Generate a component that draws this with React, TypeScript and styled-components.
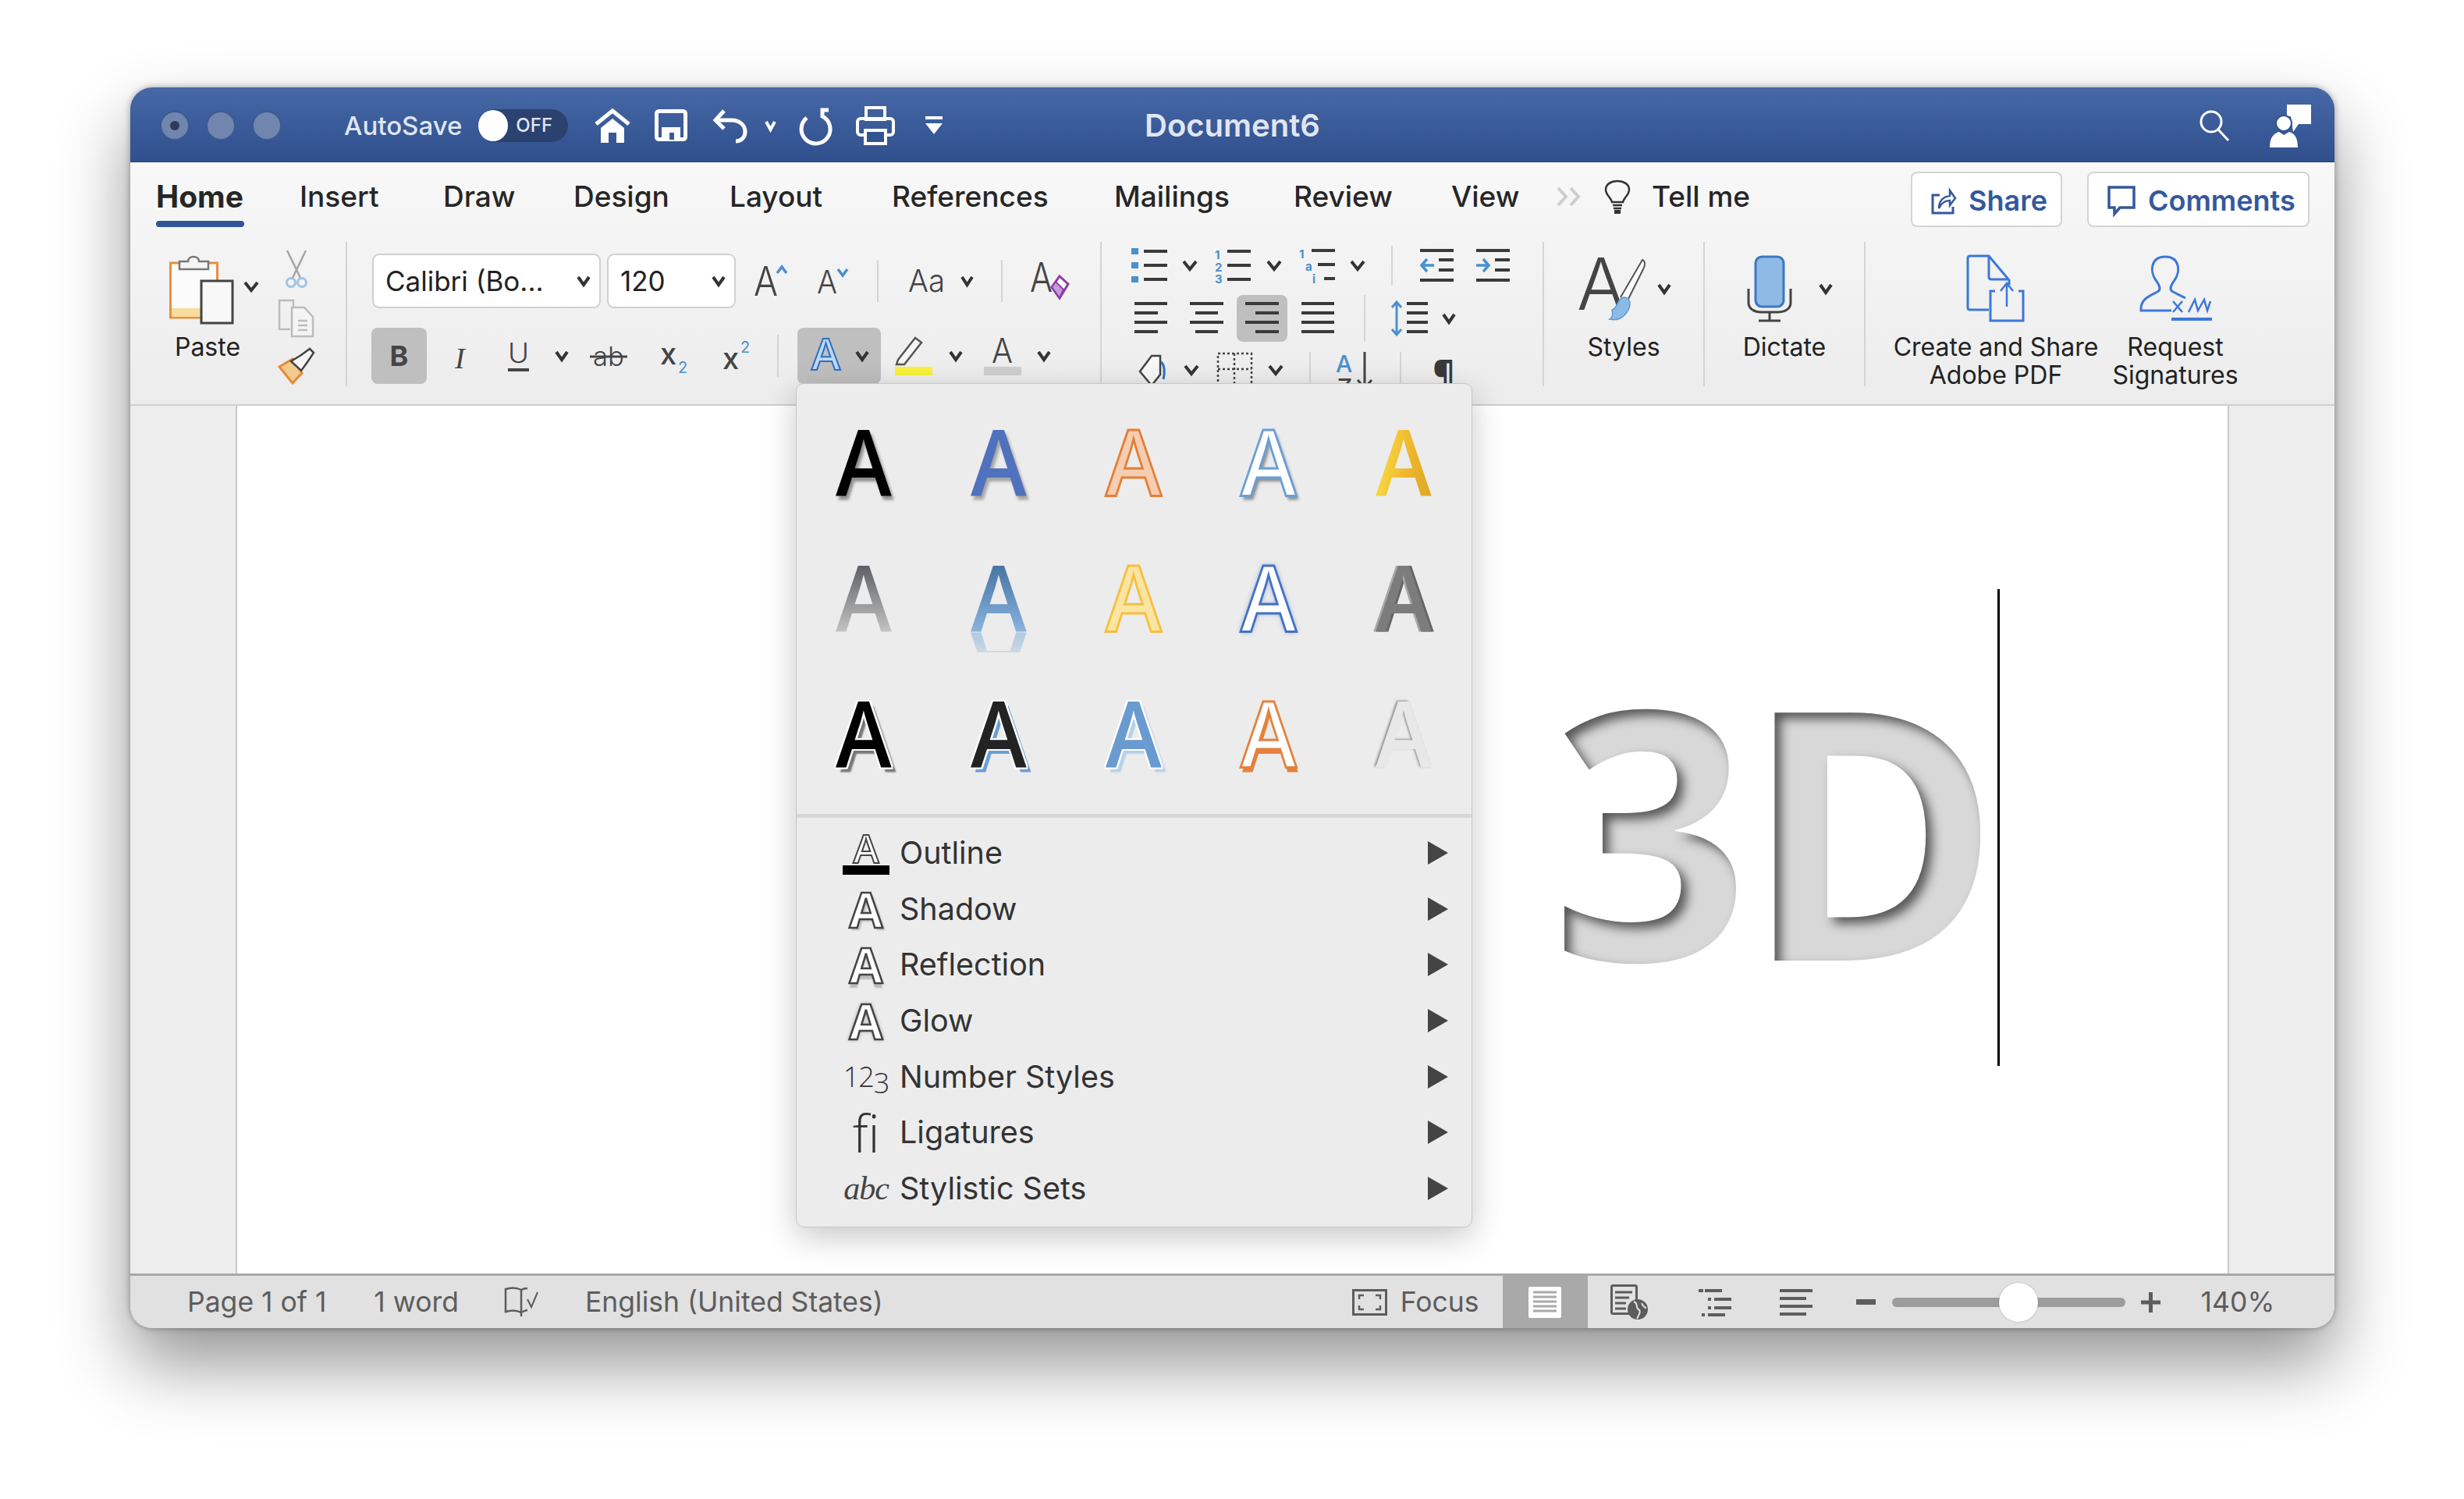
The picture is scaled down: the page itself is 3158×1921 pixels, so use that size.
import React from "react";
import styled, { createGlobalStyle } from "styled-components";

const BLUE = "#4a90d0";
const INK = "#444";
const UI = '"Inter", "Liberation Sans", sans-serif';
const WORDART = '"Open Sans", "Liberation Sans", sans-serif';

const Global = createGlobalStyle`
  html, body { margin: 0; padding: 0; background: #fff; }
  body { font-family: ${UI}; }
`;

const Stage = styled.div`
  width: 3158px;
  height: 1921px;
  padding: 112px 166px 0 167px;
  box-sizing: border-box;
  background: #fff;
`;
const Win = styled.div`
  position: relative;
  width: 2825px;
  height: 1590px;
  display: flex;
  flex-direction: column;
  border-radius: 28px;
  box-shadow: 0 46px 90px rgba(0, 0, 0, 0.42), 0 0 8px rgba(0, 0, 0, 0.35);
  background: #ededed;
`;

/* title bar */
const TitleBar = styled.div`
  height: 96px;
  flex: none;
  padding-top: 2px;
  display: grid;
  grid-template-columns: 1fr auto 1fr;
  align-items: center;
  background: linear-gradient(#4768a6, #2f4f8d);
  border-radius: 28px 28px 0 0;
  border-bottom: 1px solid #2a4478;
  box-sizing: border-box;
`;
const TitleLeft = styled.div`
  display: flex;
  align-items: center;
  padding-left: 38px;
`;
const TitleRight = styled.div`
  display: flex;
  align-items: center;
  justify-content: flex-end;
  padding-right: 30px;
`;
const Light = styled.div<{ $dot?: boolean }>`
  width: 38px;
  height: 38px;
  margin-right: 21px;
  border-radius: 50%;
  background: #7186ae;
  border: 2px solid #3d5a92;
  box-sizing: border-box;
  display: flex;
  align-items: center;
  justify-content: center;
  &::after {
    content: "";
    width: 12px;
    height: 12px;
    border-radius: 50%;
    background: ${(p) => (p.$dot ? "#2f3b55" : "transparent")};
  }
`;
const AutoSave = styled.span`
  margin-left: 59px;
  font-size: 33px;
  font-weight: 500;
  color: #dfe6f3;
`;
const Toggle = styled.div`
  margin-left: 21px;
  width: 115px;
  height: 42px;
  border-radius: 21px;
  background: #2b4270;
  display: flex;
  align-items: center;
  box-sizing: border-box;
`;
const Knob = styled.div`
  width: 38px;
  height: 40px;
  border-radius: 50%;
  background: #fff;
`;
const ToggleText = styled.span`
  margin-left: 10px;
  font-size: 24px;
  font-weight: 500;
  color: #dfe6f3;
`;
const DocTitle = styled.div`
  font-size: 40px;
  font-weight: 600;
  color: #e0e6f2;
`;

/* tabs */
const Ribbon = styled.div`
  height: 312px;
  flex: none;
  background: linear-gradient(#f8f8f8, #ececec);
  border-bottom: 2px solid #cfcfcf;
  box-sizing: border-box;
`;
const TabRow = styled.div`
  height: 102px;
  box-sizing: border-box;
  padding: 12px 32px 0 33px;
  display: flex;
  align-items: flex-start;
`;
const Tab = styled.div<{ $w: number; $active?: boolean }>`
  width: ${(p) => p.$w}px;
  flex: none;
  height: 71px;
  display: flex;
  flex-direction: column;
  font-size: ${(p) => (p.$active ? 39 : 37)}px;
  font-weight: ${(p) => (p.$active ? 700 : 500)};
  color: #262626;
  line-height: 63px;
`;
const TabLine = styled.div`
  width: 113px;
  height: 8px;
  border-radius: 4px;
  background: #2f5597;
`;
const TellMe = styled.span`
  margin-left: 26px;
  font-size: 37px;
  font-weight: 500;
  color: #262626;
  line-height: 63px;
`;
const TellIcons = styled.div`
  display: flex;
  align-items: center;
  height: 63px;
`;
const ShareBox = styled.div`
  margin-left: auto;
  display: flex;
  gap: 32px;
`;
const ShareButton = styled.div<{ $w: number }>`
  width: ${(p) => p.$w}px;
  height: 71px;
  box-sizing: border-box;
  padding: 2px 0 0 24px;
  background: #fff;
  border: 2px solid #d4d4d4;
  border-radius: 8px;
  display: flex;
  align-items: center;
  gap: 16px;
  font-size: 36px;
  font-weight: 600;
  color: #35589c;
`;

/* ribbon groups */
const Groups = styled.div`
  display: flex;
  height: 185px;
`;
const Group = styled.div<{ $w: number; $pl: number; $last?: boolean }>`
  width: ${(p) => p.$w}px;
  flex: none;
  box-sizing: border-box;
  padding-left: ${(p) => p.$pl}px;
  border-right: ${(p) => (p.$last ? "none" : "2px solid #d4d4d4")};
`;
const ClipGroup = styled(Group)`
  display: flex;
`;
const RowGroup = styled(Group)`
  display: flex;
  flex-direction: column;
`;
const BigGroup = styled(Group)`
  display: flex;
  gap: 20px;
`;
const BigTool = styled.div<{ $w?: number }>`
  width: ${(p) => (p.$w ? `${p.$w}px` : "100%")};
  flex: none;
  display: flex;
  flex-direction: column;
  align-items: center;
  padding-top: 15px;
  box-sizing: border-box;
`;
const BigIcon = styled.div`
  height: 90px;
  flex: none;
  display: flex;
  align-items: center;
  justify-content: center;
`;
const BigLabel = styled.div<{ $nudge?: number }>`
  margin-top: 12px;
  margin-left: ${(p) => p.$nudge ?? 0}px;
  font-size: 32px;
  line-height: 36px;
  color: #222;
  text-align: center;
  white-space: nowrap;
`;
const PasteChevron = styled.div`
  margin-left: 13px;
  padding-top: 50px;
`;
const SmallColumn = styled.div`
  margin-left: 24px;
  padding-top: 10px;
  display: flex;
  flex-direction: column;
  align-items: center;
  gap: 14px;
  width: 47px;
`;
const ToolRow = styled.div<{ $h: number; $mt: number }>`
  height: ${(p) => p.$h}px;
  margin-top: ${(p) => p.$mt}px;
  display: flex;
  align-items: center;
`;
const Combo = styled.div<{ $w: number; $ml?: number }>`
  width: ${(p) => p.$w}px;
  height: 70px;
  flex: none;
  margin-left: ${(p) => p.$ml ?? 0}px;
  box-sizing: border-box;
  background: #fff;
  border: 2px solid #d0d0d0;
  border-radius: 9px;
  display: flex;
  align-items: center;
  justify-content: space-between;
  padding: 0 11px 0 15px;
  font-size: 35px;
  color: #222;
`;
const Pressed = styled.div<{ $w: number; $h: number; $ml?: number }>`
  width: ${(p) => p.$w}px;
  height: ${(p) => p.$h}px;
  flex: none;
  margin-left: ${(p) => p.$ml ?? 0}px;
  background: #bfbfbf;
  border-radius: 8px;
  display: flex;
  align-items: center;
  justify-content: center;
  gap: 14px;
  font-size: 36px;
  font-weight: 700;
  color: #444;
`;
const MiniSep = styled.div<{ $ml: number; $h: number }>`
  width: 2px;
  height: ${(p) => p.$h}px;
  flex: none;
  margin-left: ${(p) => p.$ml}px;
  background: #d4d4d4;
`;
const Svg = styled.svg<{ $ml?: number }>`
  display: block;
  flex: none;
  overflow: visible;
  margin-left: ${(p) => p.$ml ?? 0}px;
`;

function Ic({ w, h, ml, children }: { w: number; h: number; ml?: number; children: React.ReactNode }) {
  return (
    <Svg $ml={ml} width={w} height={h} viewBox={`0 0 ${w} ${h}`} fill="none">
      {children}
    </Svg>
  );
}
function Chev({ ml, w = 18, color = "#333" }: { ml?: number; w?: number; color?: string }) {
  return (
    <Ic w={w} h={14} ml={ml}>
      <path d={`M2 2 L${w / 2} 12 L${w - 2} 2`} stroke={color} strokeWidth={4} />
    </Ic>
  );
}
const svgText = { fontFamily: UI, fill: INK };

function ThinA({ x, y, size, len }: { x: number; y: number; size: number; len: number }) {
  return (
    <text x={x} y={y} fontSize={size} fontWeight={300} textLength={len} lengthAdjust="spacingAndGlyphs" style={svgText}>
      A
    </text>
  );
}

function HLines({ rows, color = "#3a3a3a", sw = 4 }: { rows: [number, number, number][]; color?: string; sw?: number }) {
  return (
    <>
      {rows.map(([x1, x2, y], i) => (
        <line key={i} x1={x1} x2={x2} y1={y} y2={y} stroke={color} strokeWidth={sw} />
      ))}
    </>
  );
}

/* canvas */
const Canvas = styled.div`
  flex: 1;
  min-height: 0;
  padding: 0 135px;
  background: #ededed;
`;
const Paper = styled.div`
  height: 100%;
  box-sizing: border-box;
  padding: 0 292px 32px 0;
  background: #fff;
  border-left: 2px solid #c9c9c9;
  border-right: 2px solid #c9c9c9;
  display: flex;
  justify-content: flex-end;
  align-items: center;
`;
const HiddenDefs = styled.svg`
  position: absolute;
  width: 0;
  height: 0;
`;
const Embossed = styled.div`
  font-family: ${WORDART};
  font-size: 445px;
  font-weight: 700;
  line-height: 1;
  letter-spacing: -8px;
  margin: -4px 4px 0 0;
  color: #d8d8d8;
  filter: url(#emboss);
`;
const Caret = styled.div`
  width: 3px;
  height: 611px;
  flex: none;
  background: #000;
`;

/* status bar */
const StatusBar = styled.div`
  height: 70px;
  flex: none;
  box-sizing: border-box;
  border-top: 3px solid #a8a8a8;
  border-radius: 0 0 28px 28px;
  background: #e1e1e1;
  display: flex;
  align-items: center;
  font-size: 35.5px;
  color: #5d5d5d;
`;
const StatusText = styled.span<{ $ml: number }>`
  margin-left: ${(p) => p.$ml}px;
  white-space: nowrap;
`;
const ActiveView = styled.div`
  margin-left: 30px;
  width: 109px;
  height: 100%;
  flex: none;
  background: #a9a9a9;
  display: flex;
  align-items: center;
  justify-content: center;
`;
const Track = styled.div`
  position: relative;
  margin-left: 21px;
  width: 299px;
  height: 12px;
  border-radius: 6px;
  background: #9c9c9c;
`;
const Thumb = styled.div<{ $left: number }>`
  position: absolute;
  left: ${(p) => p.$left}px;
  top: -19px;
  width: 50px;
  height: 50px;
  border-radius: 50%;
  background: #fff;
  box-shadow: 0 0 2px rgba(0, 0, 0, 0.3);
`;

/* text effects menu */
const Menu = styled.div`
  position: absolute;
  left: 853px;
  top: 379px;
  width: 867px;
  height: 1082px;
  box-sizing: border-box;
  background: #ececec;
  border: 1px solid #c6c6c6;
  border-radius: 10px;
  box-shadow: 0 12px 40px rgba(0, 0, 0, 0.22);
  z-index: 5;
`;
const Gallery = styled.div`
  display: grid;
  grid-template-columns: repeat(5, 1fr);
  grid-auto-rows: 174px;
  padding: 11px 0 18px;
`;
const Cell = styled.div`
  display: flex;
  align-items: center;
  justify-content: center;
`;
const ring = (c: string, n: number) =>
  `${n}px 0 0 ${c}, -${n}px 0 0 ${c}, 0 ${n}px 0 ${c}, 0 -${n}px 0 ${c}, ${n}px ${n}px 0 ${c}, -${n}px ${n}px 0 ${c}, ${n}px -${n}px 0 ${c}, -${n}px -${n}px 0 ${c}`;
const Art = styled.span<{ $fill: string; $stroke?: string; $shadow?: string; $paint?: string; $reflect?: boolean }>`
  font-family: ${WORDART};
  font-size: 118px;
  font-weight: 600;
  line-height: 0.776;
  display: block;
  transform: scaleX(0.92);
  color: ${(p) => (p.$paint ? "transparent" : p.$fill)};
  ${(p) => (p.$stroke ? `-webkit-text-stroke: 3px ${p.$stroke};` : "")}
  ${(p) => (p.$shadow ? `text-shadow: ${p.$shadow};` : "")}
  ${(p) => (p.$paint ? `background: ${p.$paint}; -webkit-background-clip: text; background-clip: text;` : "")}
  ${(p) =>
    p.$reflect
      ? "-webkit-box-reflect: below 0 linear-gradient(transparent 72%, rgba(255,255,255,0.25) 72%, rgba(255,255,255,0.6));"
      : ""}
`;
const Divider = styled.div`
  height: 5px;
  background: #d8d8d8;
`;
const MenuList = styled.div`
  padding-top: 9px;
`;
const MenuRow = styled.div`
  height: 71.7px;
  display: flex;
  align-items: center;
  padding: 0 30px 0 59px;
  font-size: 39.5px;
  color: #333;
`;
const MenuIcon = styled.div`
  width: 60px;
  height: 60px;
  margin-right: 13px;
  flex: none;
  display: flex;
  flex-direction: column;
  align-items: center;
  justify-content: center;
  color: #333;
`;
const RowArrow = styled.div`
  margin-left: auto;
  width: 0;
  height: 0;
  border-left: 26px solid #444;
  border-top: 15px solid transparent;
  border-bottom: 15px solid transparent;
`;
const HollowA = styled.span<{ $halo?: string; $small?: boolean }>`
  font-family: ${WORDART};
  font-size: ${(p) => (p.$small ? 50 : 62)}px;
  line-height: ${(p) => (p.$small ? 44 : 60)}px;
  font-weight: ${(p) => (p.$small ? 600 : 700)};
  color: #fff;
  -webkit-text-stroke: ${(p) => (p.$small ? 2 : 2.5)}px #444;
  ${(p) => (p.$halo ? `text-shadow: ${p.$halo};` : "")}
`;
const Swatch = styled.div`
  width: 60px;
  height: 12px;
  background: #000;
`;
const Numerals = styled.span`
  font-family: ${WORDART};
  font-size: 36px;
  font-weight: 300;
  white-space: nowrap;
  letter-spacing: -1px;
`;
const OldStyle = styled.span`
  position: relative;
  top: 8px;
`;
const Ligature = styled.span`
  font-family: ${WORDART};
  font-size: 66px;
  font-weight: 300;
  line-height: 60px;
`;
const ItalicAbc = styled.span`
  font-family: "Liberation Serif", serif;
  font-size: 42px;
  font-style: italic;
  letter-spacing: -1px;
  color: #444;
`;

const ART_STYLES: React.ComponentProps<typeof Art>[] = [
  { $fill: "#000", $shadow: "3px 5px 4px rgba(0,0,0,0.4)" },
  { $fill: "#4f71be", $shadow: "3px 5px 4px rgba(0,0,0,0.3)" },
  { $fill: "#f5cdb1", $stroke: "#e67e35" },
  { $fill: "#fff", $stroke: "#6a9fd6", $shadow: "3px 5px 4px rgba(0,0,0,0.4)" },
  { $fill: "#eebb2e", $paint: "linear-gradient(100deg, #f8d440 20%, #ecb52a 60%, #dfa626)" },
  { $fill: "#888", $paint: "linear-gradient(#55575b, #c4c4c4)" },
  { $fill: "#6a9bd0", $paint: "linear-gradient(#416f9f, #8ab3de)", $reflect: true },
  { $fill: "#fbe5a2", $stroke: "#f7bf3d" },
  { $fill: "#fff", $stroke: "#4472c4", $shadow: "0 0 7px rgba(68,114,196,0.75)" },
  { $fill: "#7c7c7c", $shadow: "-3px 0 0 #a8a8a8, 3px 0 0 #666" },
  { $fill: "#000", $shadow: `${ring("#fff", 2)}, 6px 6px 2px #777` },
  { $fill: "#232323", $shadow: `${ring("#fff", 2)}, 6px 6px 0 #6a9fd6` },
  { $fill: "#6a9bd0", $shadow: `${ring("#fff", 2)}, 6px 6px 2px #b5cfeb` },
  { $fill: "#fff", $stroke: "#e5813d", $shadow: "2px 6px 0 #e5813d" },
  { $fill: "#e8e8e8", $shadow: "-2px -1px 3px #8a8a8a" },
];

const MENU_ROWS: [React.ReactNode, string][] = [
  [
    <>
      <HollowA $small>A</HollowA>
      <Swatch />
    </>,
    "Outline",
  ],
  [<HollowA $halo="3px 3px 2px #bbb">A</HollowA>, "Shadow"],
  [<HollowA $halo="0 6px 2px #bbb">A</HollowA>, "Reflection"],
  [<HollowA $halo="0 0 5px #aaa, 0 0 5px #aaa">A</HollowA>, "Glow"],
  [
    <Numerals>
      12<OldStyle>3</OldStyle>
    </Numerals>,
    "Number Styles",
  ],
  [<Ligature>ﬁ</Ligature>, "Ligatures"],
  [<ItalicAbc>abc</ItalicAbc>, "Stylistic Sets"],
];

const TABS: [string, number][] = [
  ["Home", 184],
  ["Insert", 184],
  ["Draw", 167],
  ["Design", 200],
  ["Layout", 208],
  ["References", 285],
  ["Mailings", 230],
  ["Review", 202],
  ["View", 134],
];

export default function App() {
  return (
    <Stage>
      <Global />
      <HiddenDefs>
        <filter id="emboss" x="-5%" y="-5%" width="110%" height="110%" colorInterpolationFilters="sRGB">
          <feOffset in="SourceAlpha" dx="8" dy="8" />
          <feGaussianBlur stdDeviation="7" result="b" />
          <feComposite in="SourceAlpha" in2="b" operator="out" result="inner" />
          <feFlood floodColor="#565656" />
          <feComposite in2="inner" operator="in" result="shade" />
          <feMerge>
            <feMergeNode in="SourceGraphic" />
            <feMergeNode in="shade" />
          </feMerge>
        </filter>
      </HiddenDefs>
      <Win>
        <TitleBar>
          <TitleLeft>
            <Light $dot />
            <Light />
            <Light />
            <AutoSave>AutoSave</AutoSave>
            <Toggle>
              <Knob />
              <ToggleText>OFF</ToggleText>
            </Toggle>
            <Ic w={48} h={44} ml={33}>
              <path d="M3 20 L24 3 L45 20" stroke="#fff" strokeWidth={5} />
              <path d="M9 25 L24 13 L39 25 V44 H29 V31 H19 V44 H9Z" fill="#fff" />
            </Ic>
            <Ic w={42} h={41} ml={30}>
              <rect x={2.5} y={2.5} width={37} height={36} rx={3} stroke="#fff" strokeWidth={5} />
              <rect x={9} y={23} width={24} height={16} fill="#fff" />
              <rect x={19} y={30} width={6} height={9} fill="#3a5a96" />
            </Ic>
            <Ic w={45} h={44} ml={32}>
              <path d="M15 3 L4 15 L15 26 M5 15 H24 C36 15 42 22 42 30 C42 37 37 42 30 42" stroke="#fff" strokeWidth={5} />
            </Ic>
            <Chev ml={22} w={15} color="#fff" />
            <Ic w={43} h={46} ml={28}>
              <path d="M11 13 A18.5 18.5 0 1 0 31 11 V3 H39" stroke="#fff" strokeWidth={5} />
            </Ic>
            <Ic w={50} h={50} ml={31}>
              <rect x={13} y={2} width={24} height={15} stroke="#fff" strokeWidth={4} />
              <rect x={2} y={16} width={46} height={21} rx={4} stroke="#fff" strokeWidth={4} />
              <rect x={12} y={31} width={26} height={17} fill="#34548f" stroke="#fff" strokeWidth={4} />
            </Ic>
            <Ic w={22} h={23} ml={39}>
              <rect width={22} height={4} fill="#fff" />
              <path d="M0 9 H22 L11 23Z" fill="#fff" />
            </Ic>
          </TitleLeft>
          <DocTitle>Document6</DocTitle>
          <TitleRight>
            <Ic w={40} h={42}>
              <circle cx={16} cy={16} r={13} stroke="#fff" strokeWidth={3} />
              <path d="M25 26 L38 40" stroke="#fff" strokeWidth={3} />
            </Ic>
            <Ic w={53} h={56} ml={51}>
              <path d="M22 1 H53 V26 H37 L30 36 L27 16 H22Z" fill="#fff" />
              <circle cx={18} cy={25} r={10} fill="#fff" stroke="#34548f" strokeWidth={2} />
              <path d="M0 56 C0 42 6 38 12 36 L18 40 L25 36 C31 38 36 42 36 56Z" fill="#fff" />
            </Ic>
          </TitleRight>
        </TitleBar>

        <Ribbon>
          <TabRow>
            {TABS.map(([label, w], i) => (
              <Tab key={label} $w={w} $active={i === 0}>
                {label}
                {i === 0 && <TabLine />}
              </Tab>
            ))}
            <TellIcons>
              <Ic w={36} h={28}>
                <path d="M3 3 L13 14 L3 25 M19 3 L29 14 L19 25" stroke="#cdcdcd" strokeWidth={4} />
              </Ic>
              <Ic w={36} h={44} ml={25}>
                <path d="M11 29 C9 22 3 20 3 13 C3 6 10 2 18 2 C26 2 33 6 33 13 C33 20 27 22 25 29Z" stroke="#333" strokeWidth={2.5} />
                <path d="M12 33 H24 M13 37 H23" stroke="#333" strokeWidth={2.5} />
                <rect x={14} y={39} width={8} height={5} fill="#333" />
              </Ic>
              <TellMe>Tell me</TellMe>
            </TellIcons>
            <ShareBox>
              <ShareButton $w={194}>
                <Ic w={32} h={36}>
                  <path d="M11 11 H2 V34 H28 V26" stroke="#35589c" strokeWidth={3} />
                  <path d="M10 28 C10 18 16 13 24 12 V5 L31 15 L24 24 V18 C18 18 13 21 10 28Z" stroke="#35589c" strokeWidth={2.5} />
                </Ic>
                Share
              </ShareButton>
              <ShareButton $w={285}>
                <Ic w={36} h={38}>
                  <path d="M2 2 H34 V28 H16 L9 36 V28 H2Z" stroke="#35589c" strokeWidth={3.5} />
                </Ic>
                Comments
              </ShareButton>
            </ShareBox>
          </TabRow>

          <Groups>
            <ClipGroup $w={278} $pl={50}>
              <BigTool $w={82}>
                <BigIcon>
                  <Ic w={82} h={90}>
                    <rect x={1.5} y={12} width={60} height={70} fill="#fbfbfb" stroke="#e8903e" strokeWidth={3} />
                    <rect x={3} y={70} width={40} height={11} fill="#f9dc9e" />
                    <path d="M13 20 V10 H24 C24 2 38 2 38 10 H50 V20Z" fill="#f5f5f5" stroke="#777" strokeWidth={2.5} />
                    <rect x={41} y={35} width={40} height={54} fill="#f8f8f8" stroke="#444" strokeWidth={3} />
                  </Ic>
                </BigIcon>
                <BigLabel $nudge={16}>Paste</BigLabel>
              </BigTool>
              <PasteChevron>
                <Chev w={20} />
              </PasteChevron>
              <SmallColumn>
                <Ic w={32} h={50}>
                  <path d="M4 1 L21 36 M28 1 L11 36" stroke="#a4a4a4" strokeWidth={2.5} />
                  <circle cx={9} cy={42} r={5.5} stroke="#9ec3e6" strokeWidth={3} />
                  <circle cx={23} cy={42} r={5.5} stroke="#9ec3e6" strokeWidth={3} />
                </Ic>
                <Ic w={47} h={48}>
                  <path d="M20 9 V1 H2 V38 H16" stroke="#bcbcbc" strokeWidth={2.5} />
                  <path d="M18 10 H34 L45 22 V47 H18Z" stroke="#bcbcbc" strokeWidth={2.5} fill="#f4f4f4" />
                  <path d="M26 27 H38 M26 33 H38 M26 39 H38" stroke="#bcbcbc" strokeWidth={2.5} />
                </Ic>
                <Ic w={47} h={46}>
                  <path d="M2 24 L19 14 L31 32 L19 45Z" fill="#f4c98e" stroke="#e58a33" strokeWidth={3} />
                  <path d="M17 17 L30 29 L38 18 L46 6 L41 1 L30 9Z" fill="#f6f6f6" stroke="#444" strokeWidth={2.5} />
                </Ic>
              </SmallColumn>
            </ClipGroup>

            <RowGroup $w={967} $pl={31}>
              <ToolRow $h={70} $mt={15}>
                <Combo $w={293} $ml={1}>
                  Calibri (Bo...
                  <Chev w={18} />
                </Combo>
                <Combo $w={165} $ml={8}>
                  120
                  <Chev w={18} />
                </Combo>
                <Ic w={43} h={42} ml={23}>
                  <ThinA x={0} y={40} size={52} len={31} />
                  <path d="M30 11 L36 3 L42 11" stroke={BLUE} strokeWidth={3.5} />
                </Ic>
                <Ic w={40} h={36} ml={38}>
                  <ThinA x={0} y={34} size={41} len={26} />
                  <path d="M27 3 L33 11 L39 3" stroke={BLUE} strokeWidth={3.5} />
                </Ic>
                <MiniSep $ml={37} $h={54} />
                <Ic w={48} h={32} ml={38}>
                  <text x={0} y={30} fontSize={40} fontWeight={300} textLength={47} lengthAdjust="spacingAndGlyphs" style={svgText}>
                    Aa
                  </text>
                </Ic>
                <Chev ml={19} w={17} />
                <MiniSep $ml={35} $h={54} />
                <Ic w={50} h={52} ml={35}>
                  <ThinA x={0} y={40} size={52} len={29} />
                  <path d="M28 34 L38 20 L49 30 L38 48Z" fill="#fff" stroke="#8e3aa8" strokeWidth={3} />
                  <path d="M28 34 L33 27 L43 37 L38 48Z" fill="#c79ad6" stroke="#8e3aa8" strokeWidth={2} />
                </Ic>
              </ToolRow>
              <ToolRow $h={72} $mt={25}>
                <Pressed $w={71} $h={72}>B</Pressed>
                <Ic w={22} h={40} ml={34}>
                  <text x={2} y={36} fontSize={38} fontStyle="italic" style={{ fontFamily: '"Liberation Serif", serif', fill: INK }}>I</text>
                </Ic>
                <Ic w={27} h={44} ml={48}>
                  <text x={0} y={31} fontSize={36} fontWeight={300} textLength={27} lengthAdjust="spacingAndGlyphs" style={svgText}>U</text>
                  <rect x={0} y={38} width={27} height={4} fill={INK} />
                </Ic>
                <Chev ml={33} />
                <Ic w={48} h={42} ml={27}>
                  <text x={4} y={34} fontSize={34} fontWeight={300} textLength={40} lengthAdjust="spacingAndGlyphs" style={svgText}>ab</text>
                  <line x1={0} x2={48} y1={22} y2={22} stroke={INK} strokeWidth={3} />
                </Ic>
                <Ic w={36} h={48} ml={42}>
                  <text x={0} y={35} fontSize={38} fontWeight={500} style={svgText}>x</text>
                  <text x={23} y={46} fontSize={20} style={{ fontFamily: UI, fill: BLUE }}>2</text>
                </Ic>
                <Ic w={36} h={48} ml={44}>
                  <text x={0} y={41} fontSize={38} fontWeight={500} style={svgText}>x</text>
                  <text x={23} y={20} fontSize={20} style={{ fontFamily: UI, fill: BLUE }}>2</text>
                </Ic>
                <MiniSep $ml={34} $h={54} />
                <Pressed $w={107} $h={72} $ml={24}>
                  <Ic w={44} h={48}>
                    <text x={2} y={42} fontSize={56} fontWeight={600} fill="#bcd8f3" stroke="#2f6fbf" strokeWidth={2} style={{ fontFamily: WORDART }}>A</text>
                  </Ic>
                  <Chev />
                </Pressed>
                <Ic w={48} h={50} ml={18}>
                  <path d="M4 30 L26 2 L34 8 L12 36 L2 36Z" stroke="#555" strokeWidth={2.5} fill="#f6f6f6" />
                  <rect x={0} y={39} width={48} height={11} fill="#f9f13c" />
                </Ic>
                <Chev ml={21} />
                <Ic w={48} h={50} ml={27}>
                  <ThinA x={10} y={34} size={44} len={27} />
                  <rect x={0} y={39} width={48} height={11} fill="#cfcfcf" />
                </Ic>
                <Chev ml={20} />
              </ToolRow>
            </RowGroup>

            <RowGroup $w={567} $pl={38}>
              <ToolRow $h={44} $mt={8}>
                <Ic w={46} h={44}>
                  {[0, 18, 36].map((y) => (
                    <rect key={y} x={0} y={y} width={9} height={8} fill={BLUE} />
                  ))}
                  <HLines rows={[[16, 46, 4], [16, 46, 22], [16, 46, 40]]} />
                </Ic>
                <Chev ml={19} w={20} />
                <Ic w={46} h={44} ml={22}>
                  <text x={0} y={14} fontSize={15} fontWeight={700} fill={BLUE} style={{ fontFamily: UI }}>1</text>
                  <text x={0} y={30} fontSize={15} fontWeight={700} fill={BLUE} style={{ fontFamily: UI }}>2</text>
                  <text x={0} y={45} fontSize={15} fontWeight={700} fill={BLUE} style={{ fontFamily: UI }}>3</text>
                  <HLines rows={[[16, 46, 4], [16, 46, 22], [16, 46, 40]]} />
                </Ic>
                <Chev ml={20} w={20} />
                <Ic w={46} h={46} ml={22}>
                  <text x={0} y={14} fontSize={15} fontWeight={700} fill={BLUE} style={{ fontFamily: UI }}>1</text>
                  <text x={8} y={30} fontSize={15} fontWeight={700} fill={BLUE} style={{ fontFamily: UI }}>a</text>
                  <text x={17} y={46} fontSize={15} fontWeight={700} fill={BLUE} style={{ fontFamily: UI }}>i</text>
                  <HLines rows={[[16, 46, 4], [24, 46, 22], [32, 46, 40]]} />
                </Ic>
                <Chev ml={19} w={20} />
                <MiniSep $ml={33} $h={50} />
                <Ic w={43} h={44} ml={35}>
                  <HLines rows={[[0, 43, 3], [24, 43, 15], [24, 43, 28], [0, 43, 41]]} />
                  <path d="M18 22 H2 M9 14 L2 22 L9 30" stroke={BLUE} strokeWidth={3.5} />
                </Ic>
                <Ic w={43} h={44} ml={29}>
                  <HLines rows={[[0, 43, 3], [24, 43, 15], [24, 43, 28], [0, 43, 41]]} />
                  <path d="M0 22 H16 M9 14 L16 22 L9 30" stroke={BLUE} strokeWidth={3.5} />
                </Ic>
              </ToolRow>
              <ToolRow $h={60} $mt={16}>
                <Ic w={42} h={42} ml={4}>
                  <HLines rows={[[0, 42, 2], [0, 30, 14], [0, 42, 26], [0, 30, 38]]} />
                </Ic>
                <Ic w={43} h={42} ml={29}>
                  <HLines rows={[[0, 43, 2], [7, 36, 14], [0, 43, 26], [7, 36, 38]]} />
                </Ic>
                <Pressed $w={65} $h={60} $ml={17}>
                  <Ic w={43} h={42}>
                    <HLines rows={[[0, 43, 2], [13, 43, 14], [0, 43, 26], [13, 43, 38]]} />
                  </Ic>
                </Pressed>
                <Ic w={42} h={42} ml={18}>
                  <HLines rows={[[0, 42, 2], [0, 42, 14], [0, 42, 26], [0, 42, 38]]} />
                </Ic>
                <MiniSep $ml={38} $h={60} />
                <Ic w={48} h={46} ml={32}>
                  <path d="M8 2 V44 M2 9 L8 2 L14 9 M2 37 L8 44 L14 37" stroke={BLUE} strokeWidth={3} />
                  <HLines rows={[[21, 48, 4], [21, 48, 16], [21, 48, 28], [21, 48, 40]]} />
                </Ic>
                <Chev ml={18} />
              </ToolRow>
              <ToolRow $h={46} $mt={13}>
                <Ic w={38} h={44} ml={8}>
                  <path d="M3 24 L18 4 L29 4 L29 28 L18 42Z" fill="#f8f8f8" stroke="#444" strokeWidth={2.5} />
                  <path d="M30 12 C35 16 35 26 33 34" stroke="#2f6fbf" strokeWidth={3} />
                </Ic>
                <Chev ml={21} w={20} />
                <Ic w={45} h={44} ml={23}>
                  <rect x={1} y={1} width={43} height={41} stroke="#444" strokeWidth={2.5} strokeDasharray="3 3" />
                  <path d="M22 1 V42 M1 21 H44" stroke="#444" strokeWidth={2.5} strokeDasharray="3 3" />
                </Ic>
                <Chev ml={20} w={20} />
                <MiniSep $ml={33} $h={46} />
                <Ic w={50} h={46} ml={32}>
                  <text x={0} y={26} fontSize={30} fontWeight={500} fill={BLUE} style={{ fontFamily: UI }}>A</text>
                  <text x={2} y={56} fontSize={30} fontWeight={500} style={svgText}>Z</text>
                  <path d="M37 0 V44 M28 36 L37 46 L46 36" stroke="#444" strokeWidth={3} />
                </Ic>
                <MiniSep $ml={32} $h={46} />
                <Ic w={32} h={46} ml={40}>
                  <text x={0} y={44} fontSize={44} fontWeight={700} style={{ fontFamily: WORDART, fill: "#3a3a3a" }}>¶</text>
                </Ic>
              </ToolRow>
            </RowGroup>

            <RowGroup $w={206} $pl={0}>
              <BigTool>
                <BigIcon>
                  <Ic w={88} h={90}>
                    <ThinA x={0} y={72} size={92} len={62} />
                    <path d="M56 56 L84 8 C88 10 88 14 85 20 L66 58" fill="#fff" stroke="#555" strokeWidth={2} />
                    <path d="M45 72 C52 72 52 56 60 56 C68 56 70 64 66 72 C60 84 50 86 42 84 C46 82 46 76 45 72Z" fill="#8dbbe4" stroke="#5c9ad6" strokeWidth={1.5} />
                  </Ic>
                  <Chev ml={15} />
                </BigIcon>
                <BigLabel>Styles</BigLabel>
              </BigTool>
            </RowGroup>

            <RowGroup $w={206} $pl={0}>
              <BigTool>
                <BigIcon>
                  <Ic w={58} h={84} ml={14}>
                    <rect x={11} y={1} width={36} height={64} rx={8} fill="#8ebbe6" stroke="#3c78c0" strokeWidth={3} />
                    <path d="M2 42 V60 C2 68 10 72 18 72 H40 C48 72 56 68 56 60 V42" stroke="#444" strokeWidth={3} />
                    <path d="M29 72 V83 M15 83 H43" stroke="#444" strokeWidth={3} />
                  </Ic>
                  <Chev ml={34} />
                </BigIcon>
                <BigLabel>Dictate</BigLabel>
              </BigTool>
            </RowGroup>

            <BigGroup $w={602} $pl={36} $last>
              <BigTool $w={262}>
                <BigIcon>
                  <Ic w={74} h={86}>
                    <path d="M28 70 H4 C2 70 1 69 1 67 V4 C1 2 2 1 4 1 H28 L54 32 V38" stroke="#3c78d8" strokeWidth={3} />
                    <path d="M28 1 V28 C28 30 30 31 32 31 H54" stroke="#3c78d8" strokeWidth={3} />
                    <path d="M36 46 H30 V84 H72 V46 H66" stroke="#3c78d8" strokeWidth={3} />
                    <path d="M51 66 V38 M43 46 L51 36 L59 46" stroke="#3c78d8" strokeWidth={2.5} />
                  </Ic>
                </BigIcon>
                <BigLabel>
                  Create and Share
                  <br />
                  Adobe PDF
                </BigLabel>
              </BigTool>
              <BigTool $w={158}>
                <BigIcon>
                  <Ic w={94} h={84}>
                    <path d="M42 70 H3 C2 56 12 52 24 46 C28 44 28 40 24 34 C18 26 16 20 18 12 C20 4 26 1 34 1 C42 1 48 4 50 12 C52 20 50 26 44 34 C40 40 40 44 44 46 L60 54" stroke="#3c78d8" strokeWidth={3} />
                    <path d="M44 58 L56 72 M56 58 L44 72 M64 72 L72 56 L76 70 L84 56 L88 70 L92 58" stroke="#3c78d8" strokeWidth={2.5} />
                    <rect x={42} y={79} width={52} height={4} fill="#3c78d8" />
                  </Ic>
                </BigIcon>
                <BigLabel>
                  Request
                  <br />
                  Signatures
                </BigLabel>
              </BigTool>
            </BigGroup>
          </Groups>
        </Ribbon>

        <Canvas>
          <Paper>
            <Embossed>3D</Embossed>
            <Caret />
          </Paper>
        </Canvas>

        <StatusBar>
          <StatusText $ml={73}>Page 1 of 1</StatusText>
          <StatusText $ml={61}>1 word</StatusText>
          <Ic w={44} h={40} ml={58}>
            <path d="M22 4 C16 1 8 1 2 3 V32 C8 30 16 30 22 33 C28 30 30 30 30 30 M22 4 C25 2 28 2 30 2 M22 4 V38" stroke="#5d5d5d" strokeWidth={2.5} />
            <path d="M30 16 L35 26 L43 7" stroke="#5d5d5d" strokeWidth={2} />
          </Ic>
          <StatusText $ml={60}>English (United States)</StatusText>
          <Ic w={45} h={34} ml={601}>
            <rect x={1.5} y={1.5} width={42} height={31} stroke="#5d5d5d" strokeWidth={3} />
            <path d="M9 13 V8 H15 M30 8 H36 V13 M9 21 V26 H15 M30 26 H36 V21" stroke="#5d5d5d" strokeWidth={2.5} />
          </Ic>
          <StatusText $ml={17}>Focus</StatusText>
          <ActiveView>
            <Ic w={42} h={40}>
              <rect width={42} height={40} rx={2} fill="#fff" />
              <HLines rows={[[6, 36, 7], [6, 36, 13], [6, 36, 19], [6, 36, 25], [6, 36, 31]]} color="#a9a9a9" sw={3} />
            </Ic>
          </ActiveView>
          <Ic w={48} h={46} ml={29}>
            <rect x={1.5} y={1.5} width={32} height={36} rx={2} stroke="#5d5d5d" strokeWidth={3} />
            <HLines rows={[[6, 28, 10], [6, 24, 17], [6, 20, 24], [6, 20, 31]]} color="#5d5d5d" sw={3} />
            <circle cx={35} cy={32} r={13} fill="#5d5d5d" />
            <path d="M30 22 C36 24 32 30 36 32 C40 34 36 40 34 44 M40 24 C42 28 44 30 46 30" stroke="#e1e1e1" strokeWidth={2} />
          </Ic>
          <Ic w={44} h={36} ml={63}>
            <HLines rows={[[2, 8, 3], [10, 32, 3], [14, 18, 14], [22, 44, 14], [14, 18, 25], [22, 44, 25], [6, 10, 34], [14, 36, 34]]} color="#5d5d5d" />
          </Ic>
          <Ic w={42} h={36} ml={62}>
            <HLines rows={[[0, 42, 3], [0, 34, 13], [0, 42, 23], [0, 34, 33]]} color="#5d5d5d" />
          </Ic>
          <Ic w={25} h={10} ml={56}>
            <rect width={25} height={7} y={1} fill="#5d5d5d" />
          </Ic>
          <Track>
            <Thumb $left={137} />
          </Track>
          <Ic w={25} h={26} ml={20}>
            <path d="M0 13 H25 M12.5 0 V26" stroke="#5d5d5d" strokeWidth={5} />
          </Ic>
          <StatusText $ml={52}>140%</StatusText>
        </StatusBar>

        <Menu>
          <Gallery>
            {ART_STYLES.map((s, i) => (
              <Cell key={i}>
                <Art {...s}>A</Art>
              </Cell>
            ))}
          </Gallery>
          <Divider />
          <MenuList>
            {MENU_ROWS.map(([icon, label]) => (
              <MenuRow key={label}>
                <MenuIcon>{icon}</MenuIcon>
                {label}
                <RowArrow />
              </MenuRow>
            ))}
          </MenuList>
        </Menu>
      </Win>
    </Stage>
  );
}
